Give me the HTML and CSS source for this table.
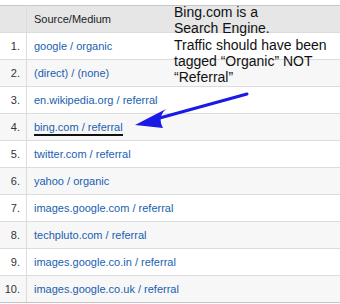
FILE: index.html
```html
<!DOCTYPE html>
<html>
<head>
<meta charset="utf-8">
<link rel="stylesheet" href="styles.css">
</head>
<body>
<div class="wrap">
  <table class="report">
    <thead>
      <tr><th class="num"></th><th class="src">Source/Medium</th></tr>
    </thead>
    <tbody>
      <tr><td class="num">1.</td><td class="src"><a>google / organic</a></td></tr>
      <tr><td class="num">2.</td><td class="src"><a>(direct) / (none)</a></td></tr>
      <tr><td class="num">3.</td><td class="src"><a>en.wikipedia.org / referral</a></td></tr>
      <tr><td class="num">4.</td><td class="src"><a class="marked">bing.com / referral</a></td></tr>
      <tr><td class="num">5.</td><td class="src"><a>twitter.com / referral</a></td></tr>
      <tr><td class="num">6.</td><td class="src"><a>yahoo / organic</a></td></tr>
      <tr><td class="num">7.</td><td class="src"><a>images.google.com / referral</a></td></tr>
      <tr><td class="num">8.</td><td class="src"><a>techpluto.com / referral</a></td></tr>
      <tr><td class="num">9.</td><td class="src"><a>images.google.co.in / referral</a></td></tr>
      <tr><td class="num">10.</td><td class="src"><a>images.google.co.uk / referral</a></td></tr>
    </tbody>
  </table>
  <div class="note">Bing.com is a<br>Search Engine.<br>Traffic should have been<br>tagged “Organic” NOT<br>“Referral”</div>
  <svg class="arrow" width="340" height="304" viewBox="0 0 340 304">
    <line x1="247" y1="94" x2="156" y2="119" stroke="#1a1ae6" stroke-width="3" stroke-linecap="round"/>
    <path d="M135 125 L166 109 Q157 117 163 128 Z" fill="#1a1ae6"/>
  </svg>
</div>
</body>
</html>
```

FILE: styles.css
```css
html, body {
  margin: 0;
  padding: 0;
  background: #fff;
}
.wrap {
  position: relative;
  width: 340px;
  height: 304px;
  overflow: hidden;
  padding-top: 5px;
  box-sizing: border-box;
}
.report {
  width: 340px;
  border-collapse: collapse;
  font-family: "Liberation Sans", Arial, sans-serif;
  font-size: 11px;
  border-top: 1px solid #c8c8c8;
  border-bottom: 1px solid #c4c4c4;
}
.report th,
.report td {
  height: 26px;
  padding: 0;
  border-bottom: 1px solid #dcdcdc;
  box-sizing: content-box;
}
.report th {
  background: #e6e6e6;
  font-weight: normal;
  text-align: left;
  color: #222;
}
.report tbody tr:nth-child(even) td {
  background: #f7f7f7;
}
.report tbody tr:last-child td {
  border-bottom: 1px solid #c4c4c4;
}
.num {
  width: 20px;
  padding-right: 6px !important;
  text-align: right;
  color: #333;
  border-right: 1px solid #dcdcdc;
}
.src {
  padding-left: 7px !important;
}
.report th.src {
  padding-left: 7px;
}
.src a {
  color: #1a5fb0;
  text-decoration: none;
}
.src a.marked {
  border-bottom: 2px solid #111;
  padding-bottom: 1px;
}
.note {
  position: absolute;
  left: 174px;
  top: 4px;
  font-family: "Liberation Sans", Arial, sans-serif;
  font-size: 14px;
  line-height: 16.3px;
  color: #111;
}
.arrow {
  position: absolute;
  left: 0;
  top: 0;
}
```
